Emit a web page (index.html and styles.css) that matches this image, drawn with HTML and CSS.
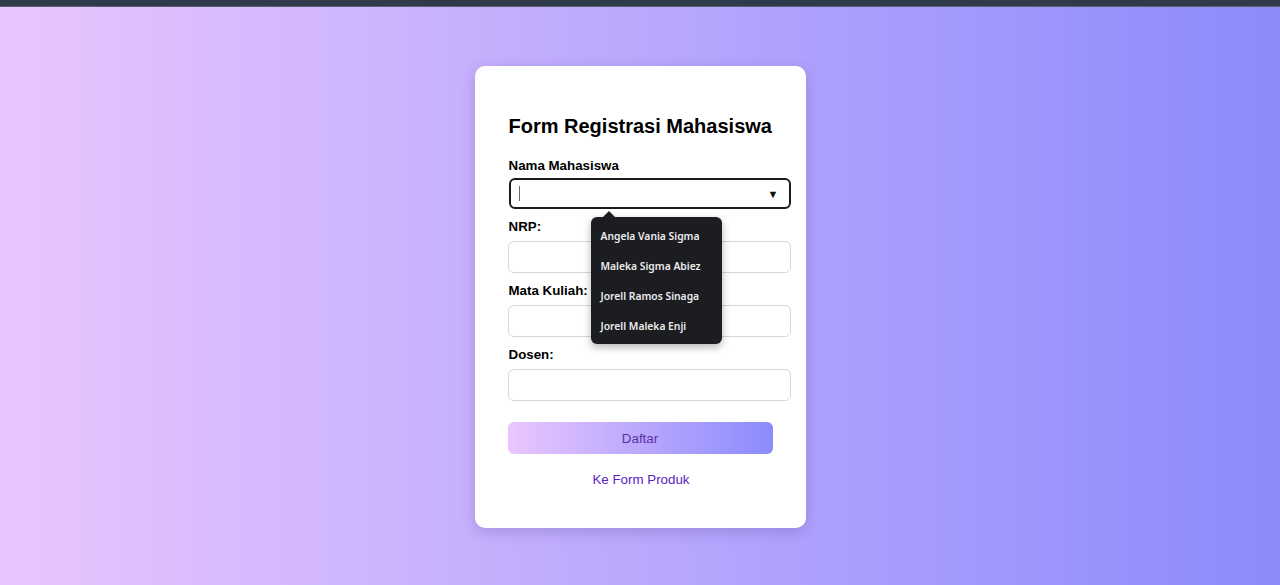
FILE: index.html
```html
<!DOCTYPE html>
<html lang="id">
<head>
<meta charset="utf-8">
<title>Form Registrasi Mahasiswa</title>
<link rel="stylesheet" href="styles.css">
</head>
<body>
<div class="topbar"></div>
<main class="stage">
  <form class="card">
    <h2 class="title">Form Registrasi Mahasiswa</h2>
    <div class="group">
      <label class="label first">Nama Mahasiswa</label>
      <div class="select-wrap">
        <div class="select">
          <span class="caret"></span>
          <span class="arrow">▼</span>
        </div>
        <div class="tooltip">
          <div class="tip-item">Angela Vania Sigma</div>
          <div class="tip-item">Maleka Sigma Abiez</div>
          <div class="tip-item">Jorell Ramos Sinaga</div>
          <div class="tip-item">Jorell Maleka Enji</div>
        </div>
      </div>
    </div>
    <div class="group">
      <label class="label">NRP:</label>
      <div class="input"></div>
    </div>
    <div class="group">
      <label class="label">Mata Kuliah:</label>
      <div class="input"></div>
    </div>
    <div class="group">
      <label class="label">Dosen:</label>
      <div class="input"></div>
    </div>
    <button type="button" class="btn">Daftar</button>
    <a class="link">Ke Form Produk</a>
  </form>
</main>
</body>
</html>
```
FILE: styles.css
```css
* { box-sizing: border-box; }
html, body { margin: 0; padding: 0; height: 100%; }
body {
  font-family: "Liberation Sans", Arial, sans-serif;
  display: flex;
  flex-direction: column;
  background: linear-gradient(to right, #e9c6fe, #8b8bfc);
}
.topbar {
  height: 7px;
  background: #2f3a4b;
  border-bottom: 1px solid #5a6070;
  flex: none;
}
.stage {
  flex: 1;
  display: flex;
  align-items: center;
  justify-content: center;
  padding-top: 2px;
}
.card {
  width: 331px;
  background: #fff;
  border-radius: 10px;
  padding: 48px 33px 40px 33px;
  box-shadow: 0 4px 14px rgba(60, 40, 120, 0.22);
  display: flex;
  flex-direction: column;
}
.card > * { flex: none; }
.title {
  margin: 0 0 20px 1px;
  font-size: 20px;
  line-height: 24px;
  font-weight: 700;
  color: #000;
  white-space: nowrap;
}
.group { margin-bottom: 10px; }
.label {
  display: block;
  font-size: 13.33px;
  line-height: 16px;
  font-weight: 700;
  color: #000;
  margin: 0 0 6px 1px;
}
.label.first { margin-bottom: 4px; }
.select-wrap { position: relative; }
.select {
  width: 282px;
  height: 31px;
  margin-left: 1px;
  border: 2px solid #1b1b1b;
  border-radius: 6px;
  display: flex;
  align-items: center;
  justify-content: space-between;
  padding: 0 10px 0 8px;
}
.caret {
  width: 1px;
  height: 15px;
  background: #6b6b6b;
}
.arrow {
  font-size: 11px;
  color: #111;
}
.tooltip {
  position: absolute;
  left: 83px;
  top: 39px;
  width: 131px;
  background: #1c1d21;
  border-radius: 6px;
  padding: 4px 0 3px;
  box-shadow: 0 3px 8px rgba(0, 0, 0, 0.3);
  z-index: 2;
}
.tooltip::before {
  content: "";
  position: absolute;
  top: -6px;
  left: 11px;
  border-left: 7px solid transparent;
  border-right: 7px solid transparent;
  border-bottom: 7px solid #1c1d21;
}
.tip-item {
  font-family: "Noto Sans", "Open Sans", sans-serif;
  font-size: 10.3px;
  font-weight: 600;
  line-height: 30px;
  color: #ececec;
  padding-left: 10px;
  white-space: nowrap;
}
.input {
  width: 283px;
  height: 32px;
  border: 1px solid #d6d6d6;
  border-radius: 6px;
  background: #fff;
}
.btn {
  margin-top: 11px;
  width: 265px;
  height: 32px;
  border: none;
  border-radius: 6px;
  background: linear-gradient(to right, #e9c6fe, #8b8bfc);
  color: #5a32a0;
  font-family: "Liberation Sans", Arial, sans-serif;
  font-size: 13.33px;
  padding: 0;
  cursor: pointer;
}
.link {
  margin-top: 18px;
  text-align: center;
  font-size: 13.33px;
  line-height: 16px;
  color: #5b21c6;
  padding-left: 2px;
}
```
